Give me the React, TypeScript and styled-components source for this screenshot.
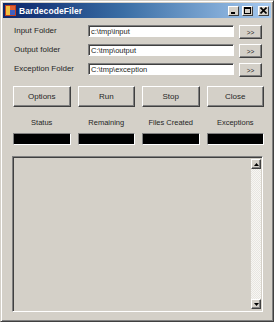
import React from 'react'
import styled, { createGlobalStyle } from 'styled-components'

const GlobalStyle = createGlobalStyle`
  html, body {
    margin: 0;
    padding: 0;
    background: #d4d0c8;
  }
  * {
    box-sizing: border-box;
  }
`

const Window = styled.div`
  width: 274px;
  height: 322px;
  display: flex;
  flex-direction: column;
  background: #d4d0c8;
  border: 1px solid;
  border-color: #d4d0c8 #404040 #404040 #d4d0c8;
  box-shadow: inset 1px 1px #ffffff, inset -1px -1px #808080;
  padding: 2px;
  font-family: 'Liberation Sans', Arial, sans-serif;
  font-size: 8px;
  color: #262626;
`

const TitleBar = styled.div`
  height: 15px;
  display: flex;
  align-items: center;
  padding: 0 2px 0 2px;
  background: linear-gradient(to right, #0a246a 0%, #3a6ea5 45%, #a6caf0 100%);
  gap: 3px;
`

const TitleText = styled.span`
  color: #fff;
  font-weight: bold;
  font-size: 8.5px;
  flex: 1;
  letter-spacing: 0.1px;
`

const CaptionButton = styled.div<{ spaced?: boolean }>`
  width: 11px;
  height: 10px;
  margin-left: ${p => (p.spaced ? '2px' : '0')};
  background: #d4d0c8;
  border: 1px solid;
  border-color: #ffffff #404040 #404040 #ffffff;
  display: flex;
  align-items: center;
  justify-content: center;
`

const Body = styled.div`
  flex: 1;
  display: flex;
  flex-direction: column;
  padding: 7px 7px 7px 9px;
`

const FormGrid = styled.div`
  display: grid;
  grid-template-columns: 70px 146px 23px;
  column-gap: 5px;
  row-gap: 5px;
  align-items: start;
  padding-left: 1px;
`

const Label = styled.div`
  height: 14px;
  line-height: 11px;
  padding-left: 1px;
  white-space: nowrap;
`

const TextField = styled.div`
  height: 12px;
  background: #fff;
  border: 1px solid;
  border-color: #808080 #ffffff #ffffff #808080;
  box-shadow: inset 1px 1px #404040;
  padding: 0 2px;
  line-height: 11px;
  font-size: 7.5px;
  white-space: nowrap;
  overflow: hidden;
`

const Button = styled.div<{ tall?: boolean }>`
  height: ${p => (p.tall ? '21px' : '14px')};
  background: #d4d0c8;
  border: 1px solid;
  border-color: #ffffff #404040 #404040 #ffffff;
  box-shadow: inset -1px -1px #808080;
  display: flex;
  align-items: center;
  justify-content: center;
  font-size: ${p => (p.tall ? '8px' : '6.5px')};
`

const QuadGrid = styled.div<{ top: number }>`
  display: grid;
  grid-template-columns: repeat(4, 1fr);
  column-gap: 7px;
  margin-top: ${p => p.top}px;
  padding-left: 1px;
`

const StatusLabel = styled.div`
  text-align: center;
  font-size: 7.5px;
  height: 10px;
  line-height: 10px;
`

const BlackBox = styled.div`
  height: 12px;
  background: #000;
  border: 1px solid;
  border-color: #808080 #ffffff #ffffff #808080;
`

const Panel = styled.div`
  flex: 1;
  margin-top: 11px;
  margin-right: 1px;
  border: 1px solid;
  border-color: #808080 #ffffff #ffffff #808080;
  box-shadow: inset 1px 1px #404040, inset -1px -1px #d4d0c8;
  display: flex;
  justify-content: flex-end;
  padding: 2px 1px 2px 2px;
`

const ScrollBar = styled.div`
  width: 10px;
  display: flex;
  flex-direction: column;
  justify-content: space-between;
  background-color: #efede9;
  background-image: repeating-conic-gradient(#f7f6f3 0% 25%, #e8e6e1 0% 50%);
  background-size: 2px 2px;
`

const ArrowButton = styled.div`
  width: 10px;
  height: 10px;
  background: #d4d0c8;
  border: 1px solid;
  border-color: #ffffff #404040 #404040 #ffffff;
  box-shadow: inset -1px -1px #808080;
  display: flex;
  align-items: center;
  justify-content: center;
`

const AppIcon = () => (
  <svg width="11" height="11" viewBox="0 0 11 11">
    <rect x="0" y="0" width="11" height="11" fill="#c04020" />
    <rect x="1" y="1" width="4" height="9" fill="#f0c040" />
    <rect x="5" y="1" width="5" height="4" fill="#e06030" />
    <rect x="5" y="5" width="5" height="5" fill="#4060c0" />
  </svg>
)

const rows = [
  { label: 'Input Folder', value: 'c:\\tmp\\input' },
  { label: 'Output folder', value: 'C:\\tmp\\output' },
  { label: 'Exception Folder', value: 'C:\\tmp\\exception' },
]

const actions = ['Options', 'Run', 'Stop', 'Close']
const counters = ['Status', 'Remaining', 'Files Created', 'Exceptions']

export default function App() {
  return (
    <>
      <GlobalStyle />
      <Window>
        <TitleBar>
          <AppIcon />
          <TitleText>BardecodeFiler</TitleText>
          <CaptionButton>
            <svg width="7" height="7" viewBox="0 0 7 7">
              <rect x="1" y="5" width="4" height="2" fill="#000" />
            </svg>
          </CaptionButton>
          <CaptionButton>
            <svg width="7" height="7" viewBox="0 0 7 7">
              <rect x="0.5" y="0.5" width="6" height="6" fill="none" stroke="#000" />
              <rect x="0" y="0" width="7" height="2" fill="#000" />
            </svg>
          </CaptionButton>
          <CaptionButton spaced>
            <svg width="7" height="7" viewBox="0 0 7 7">
              <path d="M0.5 0.5 L6.5 6.5 M6.5 0.5 L0.5 6.5" stroke="#000" strokeWidth="1.6" />
            </svg>
          </CaptionButton>
        </TitleBar>
        <Body>
          <FormGrid>
            {rows.map(r => (
              <React.Fragment key={r.label}>
                <Label>{r.label}</Label>
                <TextField>{r.value}</TextField>
                <Button>&gt;&gt;</Button>
              </React.Fragment>
            ))}
          </FormGrid>
          <QuadGrid top={9}>
            {actions.map(a => (
              <Button key={a} tall>{a}</Button>
            ))}
          </QuadGrid>
          <QuadGrid top={11}>
            {counters.map(c => (
              <StatusLabel key={c}>{c}</StatusLabel>
            ))}
          </QuadGrid>
          <QuadGrid top={5}>
            {counters.map(c => (
              <BlackBox key={c} />
            ))}
          </QuadGrid>
          <Panel>
            <ScrollBar>
              <ArrowButton>
                <svg width="5" height="3" viewBox="0 0 5 3">
                  <path d="M2.5 0 L5 3 L0 3 Z" fill="#000" />
                </svg>
              </ArrowButton>
              <ArrowButton>
                <svg width="5" height="3" viewBox="0 0 5 3">
                  <path d="M0 0 L5 0 L2.5 3 Z" fill="#000" />
                </svg>
              </ArrowButton>
            </ScrollBar>
          </Panel>
        </Body>
      </Window>
    </>
  )
}
